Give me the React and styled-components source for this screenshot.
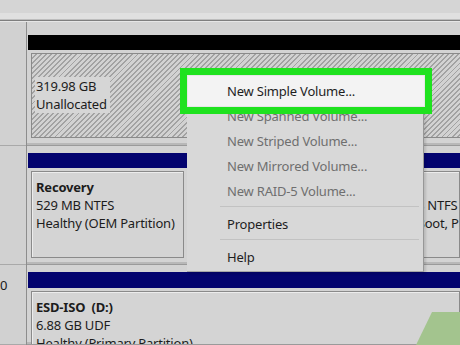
import React from 'react';
import styled, { createGlobalStyle } from 'styled-components';

const GlobalStyle = createGlobalStyle`
	html, body {
		margin: 0;
		padding: 0;
		background: #d3d3d3;
	}
	body {
		font-family: 'Noto Sans', 'Open Sans', sans-serif;
		color: #1c1c1c;
	}
`;

const App = () => {
	return (
		<Page>
			<GlobalStyle />
			<TopStrip />
			<Main>
				<LeftColumn>
					<LeftCell $height={124} />
					<LeftCell $height={119} />
					<LeftCell $height={80}>
						<DiskNumber>0</DiskNumber>
					</LeftCell>
				</LeftColumn>
				<RightColumn>
					<DiskRow $height={124} $top={13}>
						<DiskBar $color="#000000" />
						<PanelRow>
							<HatchPanel $height={85}>
								<HatchLabel>
									<Line>319.98 GB</Line>
									<Line>Unallocated</Line>
								</HatchLabel>
							</HatchPanel>
						</PanelRow>
					</DiskRow>
					<DiskRow $height={119} $top={7}>
						<DiskBar $color="#03036f" />
						<PanelRow>
							<Partition $width={153} $height={87}>
								<Line $bold>Recovery</Line>
								<Line>529 MB NTFS</Line>
								<Line>Healthy (OEM Partition)</Line>
							</Partition>
							<Partition $width={164} $height={87} />
							<Partition $height={87} $indent={9}>
								<Line $bold>OS (C:)</Line>
								<Line>465.12 GB NTFS</Line>
								<Line>Healthy (Boot, Page File)</Line>
							</Partition>
						</PanelRow>
					</DiskRow>
					<DiskRow $height={80} $top={7}>
						<DiskBar $color="#03036f" $tall />
						<PanelRow>
							<Partition $height={60}>
								<Line $bold>ESD-ISO&nbsp;&nbsp;(D:)</Line>
								<Line>6.88 GB UDF</Line>
								<Line>Healthy (Primary Partition)</Line>
							</Partition>
						</PanelRow>
					</DiskRow>
				</RightColumn>
			</Main>

			<Menu>
				<MenuItem $active>New Simple Volume...</MenuItem>
				<MenuItem $disabled>New Spanned Volume...</MenuItem>
				<MenuItem $disabled>New Striped Volume...</MenuItem>
				<MenuItem $disabled>New Mirrored Volume...</MenuItem>
				<MenuItem $disabled>New RAID-5 Volume...</MenuItem>
				<Separator />
				<MenuItem>Properties</MenuItem>
				<Separator />
				<MenuItem>Help</MenuItem>
			</Menu>

			<CornerMark />
		</Page>
	);
};

export default App;

const Page = styled.div`
	position: relative;
	width: 460px;
	height: 345px;
	overflow: hidden;
	background: #d3d3d3;
	font-size: 13px;
	letter-spacing: -0.2px;
`;
const TopStrip = styled.div`
	height: 21px;
	background: linear-gradient(
		to bottom,
		#d5d5d5 0 13px,
		#e0e0e0 13px 19px,
		#bdbdbd 19px 20px,
		#7f7f7f 20px 21px
	);
	border-bottom: 1px solid #e6e6e6;
`;
const Main = styled.div`
	display: grid;
	grid-template-columns: 27px 1fr;
`;
const LeftColumn = styled.div`
	display: flex;
	flex-direction: column;
	background: #d1d1d1;
	border-right: 1px solid #8d8d8d;
`;
const LeftCell = styled.div`
	height: ${(p) => p.$height}px;
	box-sizing: border-box;
	border-bottom: 1px solid #a9a9a9;
	overflow: hidden;
`;
const DiskNumber = styled.div`
	padding-top: 11px;
	font-size: 13px;
	color: #1a1a1a;
`;
const RightColumn = styled.div`
	display: flex;
	flex-direction: column;
	min-width: 0;
`;
const DiskRow = styled.div`
	height: ${(p) => p.$height}px;
	box-sizing: border-box;
	padding: ${(p) => p.$top}px 0 0 1px;
	border-bottom: 1px solid #9a9a9a;
	box-shadow: inset 0 -5px 0 -3px #b8b8b8;
	overflow: hidden;
`;
const DiskBar = styled.div`
	height: ${(p) => (p.$tall ? 16 : 15)}px;
	background: ${(p) => p.$color};
`;
const PanelRow = styled.div`
	display: flex;
	gap: 3px;
	margin: 3px 0 0 3px;
`;
const HatchPanel = styled.div`
	flex: 1;
	height: ${(p) => p.$height}px;
	box-sizing: border-box;
	border: 1px solid #8a8a8a;
	border-right: none;
	background: repeating-linear-gradient(
		135deg,
		#d2d2d2 0 2.3px,
		#a2a2a2 2.3px 3.6px
	);
`;
const HatchLabel = styled.div`
	display: inline-block;
	margin: 23px 0 0 3px;
	padding: 0 3px 0 1px;
	background: #d6d6d6;
`;
const Partition = styled.div`
	${(p) => (p.$width ? `width: ${p.$width}px; flex: none;` : 'flex: 1; min-width: 0;')}
	height: ${(p) => p.$height}px;
	box-sizing: border-box;
	padding: 6px 4px 0 ${(p) => p.$indent || 4}px;
	border: 1px solid #8a8a8a;
	box-shadow: inset 1px 1px 0 #ececec;
	background: #d4d4d4;
	white-space: nowrap;
	overflow: hidden;
`;
const Line = styled.div`
	line-height: 18px;
	font-weight: ${(p) => (p.$bold ? 700 : 400)};
	white-space: nowrap;
`;
const Menu = styled.div`
	position: absolute;
	left: 187px;
	top: 75px;
	width: 237px;
	height: 197px;
	box-sizing: border-box;
	padding-top: 4px;
	background: #d8d8d8;
	border-right: 1px solid #979797;
	border-bottom: 1px solid #a6a6a6;
	box-shadow: 2px 2px 2px rgba(0, 0, 0, 0.12);
	font-size: 13px;
`;
const MenuItem = styled.div`
	position: relative;
	height: 25px;
	line-height: 25px;
	padding-left: 40px;
	color: ${(p) => (p.$disabled ? '#6f6f6f' : '#1e1e1e')};

	${(p) =>
		p.$active &&
		`
		z-index: 1;
		&::before {
			content: '';
			position: absolute;
			left: 0;
			right: -2px;
			top: -4px;
			bottom: -3px;
			background: #f3f3f3;
			border: 1px solid #e6e6e6;
			outline: 7px solid #1fe21f;
			z-index: -1;
		}
	`}
`;
const Separator = styled.div`
	height: 1px;
	margin: 2px 4px 5px 33px;
	background: #c2c2c2;
`;
const CornerMark = styled.div`
	position: absolute;
	left: 416px;
	top: 312px;
	width: 44px;
	height: 33px;
	background: #a3c48e;
	clip-path: polygon(16px 0, 44px 0, 44px 33px, 0 33px);
`;
